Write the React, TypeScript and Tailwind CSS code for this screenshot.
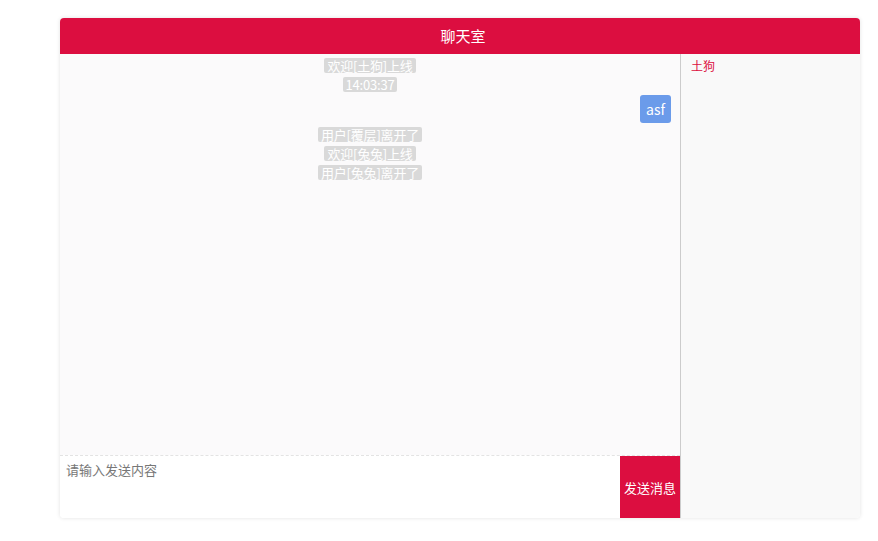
const notices = ["欢迎[土狗]上线", "14:03:37"];
const later = ["用户[覆层]离开了", "欢迎[兔兔]上线", "用户[兔兔]离开了"];

const Notice = ({ text }: { text: string }) => (
  <div className="flex justify-center">
    <span className="bg-[#d9d9d9] text-white text-[13px] leading-[15px] px-[3px] rounded-[2px] tracking-[-0.2px]">{text}</span>
  </div>
);

export default function App() {
  return (
    <div className="w-full min-h-[541px] bg-white font-['Microsoft_YaHei','Noto_Sans_CJK_SC',sans-serif] pt-[18px]">
      <div className="ml-[60px] w-[800px] h-[500px] rounded-[4px] shadow-[0_0_4px_rgba(0,0,0,0.12)] flex flex-col overflow-hidden">
        <div className="h-[36px] bg-[#dc0e40] text-white text-[15px] flex items-center justify-center pl-[6px]">聊天室</div>
        <div className="flex flex-1 min-h-0">
          <div className="w-[621px] flex flex-col border-r border-[#cccccc]">
            <div className="flex-1 bg-[#fbfafb] pt-[4px] flex flex-col gap-[4px]">
              {notices.map((t) => (
                <Notice key={t} text={t} />
              ))}
              <div className="flex justify-end pr-[9px] -mt-[1px]">
                <span className="bg-[#6b9bea] text-white text-[14px] h-[28px] px-[6px] rounded-[3px] flex items-center">asf</span>
              </div>
              {later.map((t) => (
                <Notice key={t} text={t} />
              ))}
            </div>
            <div className="h-[63px] flex border-t border-dashed border-[#e3e3e3] bg-white">
              <textarea
                placeholder="请输入发送内容"
                className="flex-1 resize-none outline-none px-[6px] py-[4px] text-[13px] placeholder:text-[#777777]"
              />
              <button className="w-[60px] bg-[#dc0e40] text-white text-[13px] pt-[2px]">发送消息</button>
            </div>
          </div>
          <div className="flex-1 bg-[#f9f9f9] px-[10px] pt-[3px]">
            <div className="text-[#dc0e40] text-[12px]">土狗</div>
          </div>
        </div>
      </div>
    </div>
  );
}
